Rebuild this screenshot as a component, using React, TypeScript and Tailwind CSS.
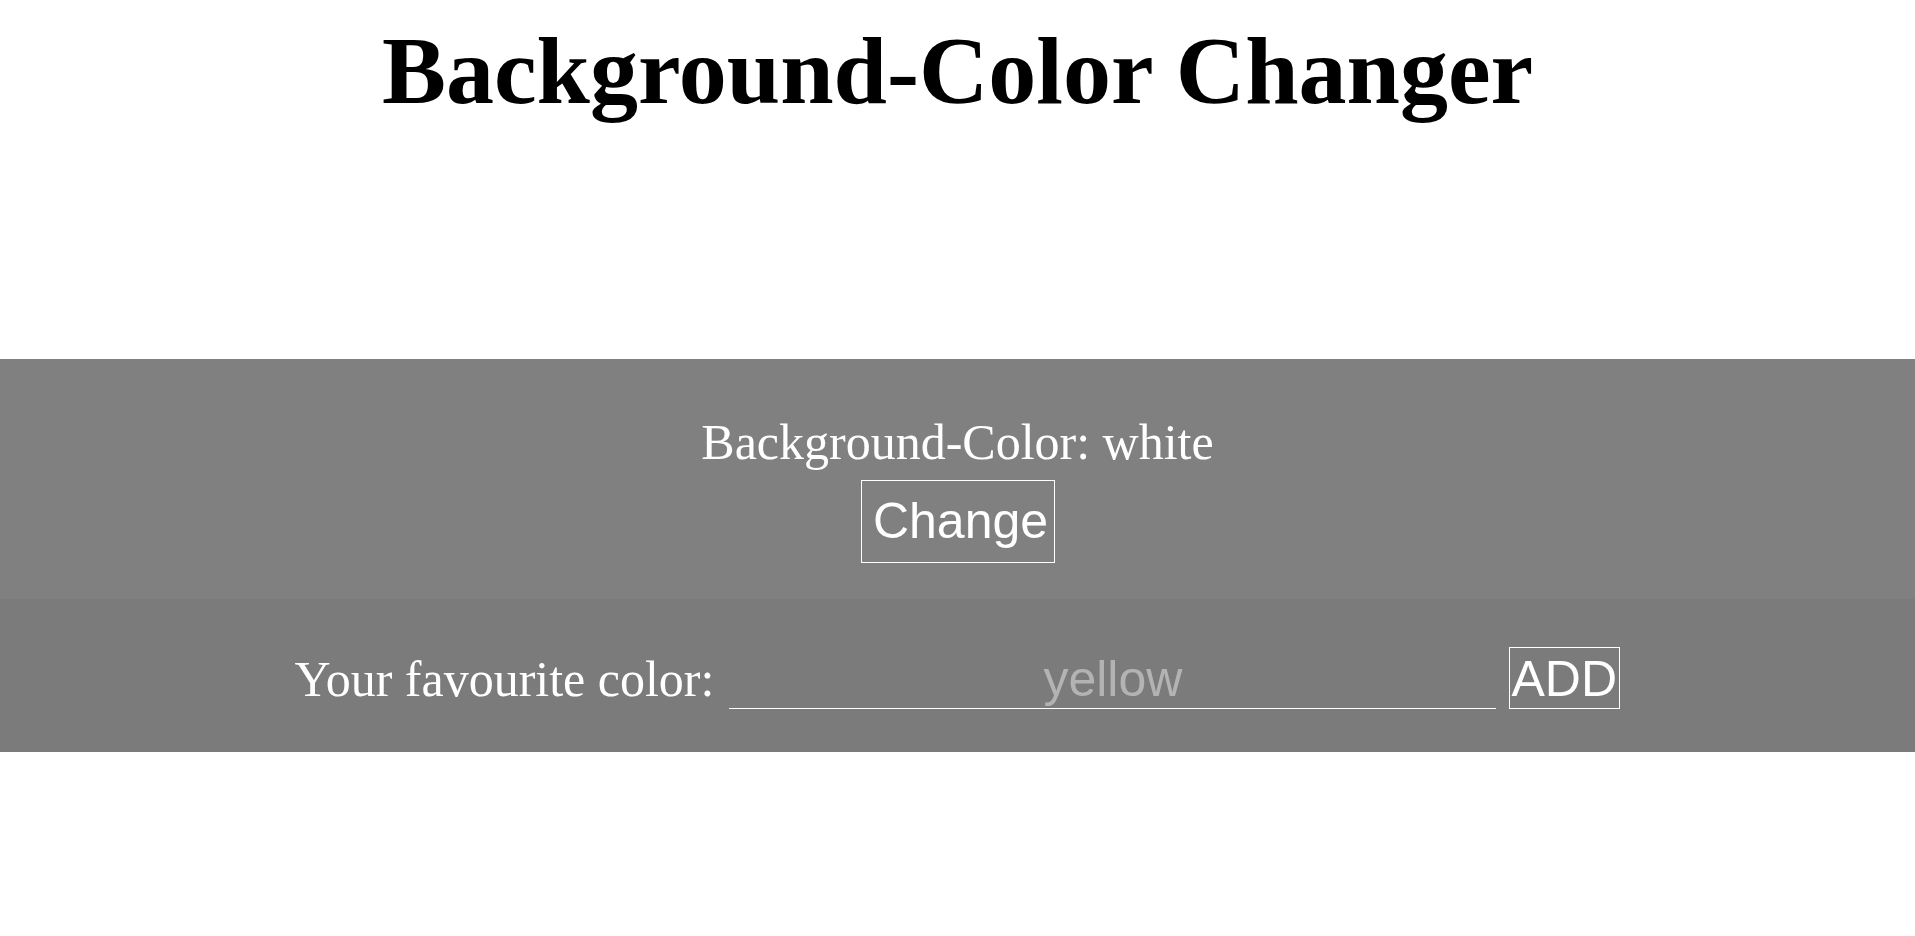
import { useState } from 'react';

export default function App() {
  // 現在の背景色と入力中の色
  const [bgColor, setBgColor] = useState('white');
  const [favorite, setFavorite] = useState('');
  const [colors, setColors] = useState<string[]>(['white']);

  const serif = "font-['Liberation_Serif','Times_New_Roman',serif]";
  const sans = "font-['Liberation_Sans',Arial,sans-serif]";

  const handleChange = () => {
    const idx = colors.indexOf(bgColor);
    setBgColor(colors[(idx + 1) % colors.length]);
  };

  const handleAdd = () => {
    if (!favorite.trim()) return;
    setColors([...colors, favorite.trim()]);
    setFavorite('');
  };

  return (
    <main className={`min-h-screen bg-white ${serif}`}>
      <h1 className="mt-[18px] text-center text-[96px] leading-[106px] font-bold text-black">
        Background-Color Changer
      </h1>

      <div className="mt-[235px] text-white">
        <section className="flex flex-col items-center bg-[#808080] pt-[55px] pb-[36px]">
          <p className="text-[50px] leading-[56px]">Background-Color: {bgColor}</p>
          <button
            type="button"
            onClick={handleChange}
            className={`mt-[10px] flex h-[83px] w-[194px] items-center justify-center border border-white pl-[6px] text-[50px] leading-[57px] ${sans}`}
          >
            Change
          </button>
        </section>

        <section className="flex items-baseline justify-center bg-[#7b7b7b] pt-[48px] pb-[43px]">
          <label htmlFor="favorite" className="text-[50px] leading-[56px]">
            Your favourite color:
          </label>
          <input
            id="favorite"
            type="text"
            value={favorite}
            onChange={(e) => setFavorite(e.target.value)}
            placeholder="yellow"
            className={`ml-[15px] w-[767px] border-b border-white bg-transparent p-0 text-center text-[50px] leading-[57px] text-white outline-none placeholder:text-[#b3b3b3] ${sans}`}
          />
          <button
            type="button"
            onClick={handleAdd}
            className={`ml-[13px] h-[62px] w-[111px] border border-white pt-[2px] pl-[1px] text-left text-[50px] leading-[56px] ${sans}`}
          >
            ADD
          </button>
        </section>
      </div>
    </main>
  );
}
